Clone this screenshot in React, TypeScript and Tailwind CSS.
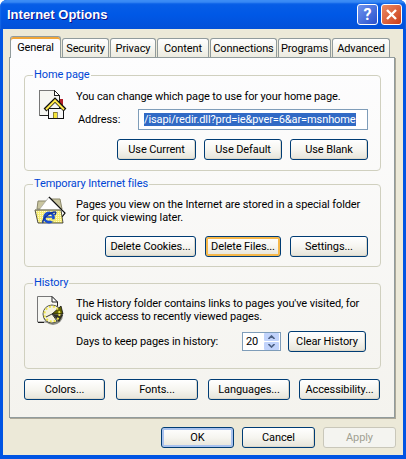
import type { ReactNode } from "react";

const tabs = [
  { label: "Security", width: "w-[47px]" },
  { label: "Privacy", width: "w-[46px]" },
  { label: "Content", width: "w-[52px]" },
  { label: "Connections", width: "w-[67px]" },
  { label: "Programs", width: "w-[53px]" },
  { label: "Advanced", width: "w-[58px]" },
];

function XpButton({ children, className = "", focus = false }: { children: ReactNode; className?: string; focus?: boolean }) {
  return (
    <button
      className={`h-[21px] shrink-0 whitespace-nowrap rounded-[3px] border border-[#003c74] bg-gradient-to-b from-white via-[#f6f5f0] to-[#e6e4d9] text-center text-black ${
        focus ? "shadow-[inset_0_0_0_2px_#f6b84a]" : "shadow-[inset_-1px_-1px_0_#dcd8cb]"
      } ${className}`}
    >
      {children}
    </button>
  );
}

function GroupBox({ title, children, className = "" }: { title: string; children: ReactNode; className?: string }) {
  return (
    <fieldset className={`rounded-[4px] border border-[#d0d0bf] ${className}`}>
      <legend className="ml-[8px] h-[14px] px-[1px] leading-[14px] text-[#0046d5]">{title}</legend>
      {children}
    </fieldset>
  );
}

function HomeIcon() {
  return (
    <svg width="30" height="32" viewBox="0 0 30 32" className="shrink-0" shapeRendering="crispEdges">
      <path d="M2 2H17L22 7V27H2Z" fill="#f6f6f2" stroke="#777" />
      <path d="M17 2L22 7H17Z" fill="#fff" stroke="#222" />
      <path d="M22 7V20M3 27.5H12" stroke="#222" />
      <rect x="23" y="11" width="3" height="8" fill="#b3202a" />
      <rect x="11" y="20" width="15" height="10" fill="#f8f8f8" stroke="#111" />
      <path d="M8 22L18 12L28 22" fill="none" stroke="#111" strokeWidth="4" shapeRendering="auto" />
      <path d="M9 21.5L18 12.5L27 21.5" fill="none" stroke="#ffe94a" strokeWidth="2" shapeRendering="auto" />
      <rect x="16" y="24" width="4" height="6" fill="#f5e43a" stroke="#222" strokeWidth="0.5" />
    </svg>
  );
}

function FolderIcon() {
  return (
    <svg width="34" height="32" viewBox="0 0 34 32" className="shrink-0">
      <defs>
        <pattern id="dither" width="2" height="2" patternUnits="userSpaceOnUse">
          <rect width="2" height="2" fill="#f6ec72" />
          <rect width="1" height="1" fill="#fffbd0" />
        </pattern>
      </defs>
      <path d="M4 6H12L14 4H26L28 14H3Z" fill="#c9c5a0" stroke="#8a876a" />
      <path d="M5 15L15 2L31 18L28 22Z" fill="#fff" stroke="#999" strokeWidth="0.6" />
      <path d="M15 2L31 18L28 22" fill="none" stroke="#111" strokeWidth="1.2" />
      <path d="M1 15H27L29 28H4Z" fill="url(#dither)" stroke="#222" strokeWidth="0.8" />
      <path d="M1 15H27" stroke="#9b9b7a" strokeWidth="1" />
      <circle cx="15" cy="22.5" r="4.6" fill="none" stroke="#1a4fd0" strokeWidth="2.6" />
      <path d="M10.5 22H20" stroke="#1a4fd0" strokeWidth="1.6" />
      <path d="M15 24.2H22V26.4H18Z" fill="#f6ec72" />
      <path d="M9 28C7.5 24 16 17 21 17C22.5 17 21.5 19 20.5 20" fill="none" stroke="#10329a" strokeWidth="1.5" />
    </svg>
  );
}

function HistoryIcon() {
  return (
    <svg width="32" height="32" viewBox="0 0 32 32" className="shrink-0">
      <path d="M1.5 2.5H16L21.5 8V28H1.5Z" fill="#f7f7f3" stroke="#777" />
      <path d="M16 2.5L21.5 8H16Z" fill="#fff" stroke="#222" />
      <path d="M21.5 8V14M2 28.5H8" stroke="#222" />
      <circle cx="17" cy="21" r="10" fill="#8e8e86" />
      <circle cx="16" cy="20" r="9" fill="#f4f2de" stroke="#55554a" />
      <path d="M16 20L25 12L27 20Z" fill="#646400" stroke="#111" strokeWidth="0.8" />
      <path d="M16 20L27 21L23 28Z" fill="#2f2f24" />
      <circle cx="16" cy="20" r="7.5" fill="none" stroke="#ece24a" strokeWidth="2" strokeDasharray="2 2" />
      <path d="M16 20L10 23M16 20L21 27" stroke="#333" strokeWidth="1" />
    </svg>
  );
}

export default function App() {
  return (
    <div className="h-[459px] w-[406px] overflow-hidden rounded-t-[7px] bg-[#0054e3] font-['Roboto',sans-serif] text-[11px] leading-[13px] tracking-[-0.1px] text-black">
      <div className="flex h-[29px] items-center justify-between bg-gradient-to-b from-[#0a5fe6] via-[#0058e6] to-[#0350d8] pl-[7px] pr-[4px] shadow-[inset_0_3px_2px_#3c8cf5]">
        <span className="font-['Liberation_Sans',sans-serif] text-[13px] font-bold tracking-normal text-white [text-shadow:1px_1px_#0f1089]">Internet Options</span>
        <div className="flex gap-[3px]">
          <div className="flex h-[21px] w-[21px] items-center justify-center rounded-[3px] border border-white bg-gradient-to-br from-[#6f93ee] to-[#2b50cc] text-[16px] font-bold text-white">
            ?
          </div>
          <div className="flex h-[21px] w-[21px] items-center justify-center rounded-[3px] border border-white bg-gradient-to-br from-[#ec8a64] to-[#c93a14]">
            <svg width="13" height="13" viewBox="0 0 13 13">
              <path d="M2 2L11 11M11 2L2 11" stroke="#fff" strokeWidth="2.4" />
            </svg>
          </div>
        </div>
      </div>

      <div className="mx-[3px] h-[426px] bg-[#ece9d8] pl-[6px] pr-[7px] pt-[6px]">
        <div className="relative z-10 flex h-[22px] items-end gap-[1px] pl-[1px]">
          <div className="relative -mb-[1px] flex h-[22px] w-[51px] items-center justify-center rounded-t-[3px] border border-b-0 border-[#919b9c] bg-[#fcfcfe] shadow-[inset_0_2px_0_#f0a63a]">
            General
          </div>
          {tabs.map((tab) => (
            <div
              key={tab.label}
              className={`flex h-[19px] ${tab.width} items-center justify-center rounded-t-[3px] border border-b-0 border-[#919b9c] bg-gradient-to-b from-white to-[#ecebe0]`}
            >
              {tab.label}
            </div>
          ))}
        </div>

        <div className="mr-[1px] h-[361px] border border-[#919b9c] bg-gradient-to-b from-[#fdfdfe] to-[#f4f3ee] pl-[14px] pr-[13px] pt-[10px] shadow-[1px_1px_0_#aca899]">
          <GroupBox title="Home page" className="h-[103px]">
            <div className="flex pl-[12px] pt-[6px]">
              <HomeIcon />
              <div className="pl-[9px] pt-[2px]">
                <p>You can change which page to use for your home page.</p>
                <div className="mt-[6px] flex items-center">
                  <span className="w-[62px] pl-[2px]">Address:</span>
                  <div className="flex h-[21px] w-[230px] items-center border border-[#7f9db9] bg-white pl-[5px]">
                    <span className="whitespace-nowrap bg-[#316ac5] text-white">/isapi/redir.dll?prd=ie&amp;pver=6&amp;ar=msnhome</span>
                  </div>
                </div>
              </div>
            </div>
            <div className="mt-[9px] flex justify-end gap-[8px] pr-[12px]">
              <XpButton className="w-[79px]">Use Current</XpButton>
              <XpButton className="w-[78px]">Use Default</XpButton>
              <XpButton className="w-[78px]">Use Blank</XpButton>
            </div>
          </GroupBox>

          <GroupBox title="Temporary Internet files" className="mt-[6px] h-[90px]">
            <div className="flex pl-[9px] pt-[4px]">
              <FolderIcon />
              <p className="whitespace-nowrap pl-[8px] pt-[3px]">
                Pages you view on the Internet are stored in a special folder
                <br />
                for quick viewing later.
              </p>
            </div>
            <div className="mt-[9px] flex justify-end gap-[9px] pr-[12px]">
              <XpButton className="w-[91px]">Delete Cookies...</XpButton>
              <XpButton className="w-[76px]" focus>
                Delete Files...
              </XpButton>
              <XpButton className="w-[78px]">Settings...</XpButton>
            </div>
          </GroupBox>

          <GroupBox title="History" className="mt-[9px] h-[93px]">
            <div className="flex pl-[11px] pt-[4px]">
              <HistoryIcon />
              <div className="pl-[8px] pt-[3px]">
                <p className="whitespace-nowrap">
                  The History folder contains links to pages you've visited, for
                  <br />
                  quick access to recently viewed pages.
                </p>
                <div className="mt-[8px] flex items-center">
                  <span className="w-[166px]">Days to keep pages in history:</span>
                  <div className="flex h-[19px] w-[39px] items-center justify-between border border-[#7f9db9] bg-white pl-[3px] pr-[1px]">
                    20
                    <div className="flex h-[17px] w-[15px] flex-col gap-[1px]">
                      <div className="flex h-[8px] items-center justify-center rounded-[1px] bg-[#c1d3fb]">
                        <svg width="7" height="4" viewBox="0 0 7 4">
                          <path d="M0.5 4L3.5 1L6.5 4" fill="none" stroke="#4d6185" strokeWidth="1.6" />
                        </svg>
                      </div>
                      <div className="flex h-[8px] items-center justify-center rounded-[1px] bg-[#c1d3fb]">
                        <svg width="7" height="4" viewBox="0 0 7 4">
                          <path d="M0.5 0L3.5 3L6.5 0" fill="none" stroke="#4d6185" strokeWidth="1.6" />
                        </svg>
                      </div>
                    </div>
                  </div>
                  <XpButton className="ml-[7px] w-[78px]">Clear History</XpButton>
                </div>
              </div>
            </div>
          </GroupBox>

          <div className="mt-[10px] flex">
            <XpButton className="w-[81px]">Colors...</XpButton>
            <XpButton className="ml-[11px] w-[82px]">Fonts...</XpButton>
            <XpButton className="ml-[10px] w-[82px]">Languages...</XpButton>
            <XpButton className="ml-[9px] w-[81px]">Accessibility...</XpButton>
          </div>
        </div>

        <div className="mt-[9px] flex justify-end gap-[8px]">
          <XpButton className="w-[73px] shadow-[inset_0_0_0_2px_#a9c2ee]">OK</XpButton>
          <XpButton className="w-[73px]">Cancel</XpButton>
          <button className="h-[21px] w-[73px] rounded-[3px] border border-[#c9c7ba] bg-[#f4f4f0] text-[#a1a192]">Apply</button>
        </div>
      </div>
    </div>
  );
}
